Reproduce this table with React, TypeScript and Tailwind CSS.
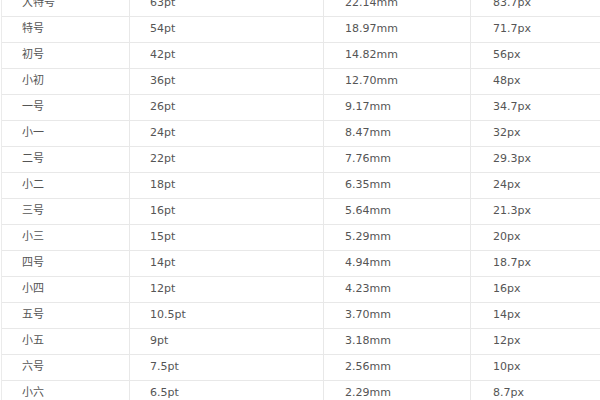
const rows = [
  ["大特号", "63pt", "22.14mm", "83.7px"],
  ["特号", "54pt", "18.97mm", "71.7px"],
  ["初号", "42pt", "14.82mm", "56px"],
  ["小初", "36pt", "12.70mm", "48px"],
  ["一号", "26pt", "9.17mm", "34.7px"],
  ["小一", "24pt", "8.47mm", "32px"],
  ["二号", "22pt", "7.76mm", "29.3px"],
  ["小二", "18pt", "6.35mm", "24px"],
  ["三号", "16pt", "5.64mm", "21.3px"],
  ["小三", "15pt", "5.29mm", "20px"],
  ["四号", "14pt", "4.94mm", "18.7px"],
  ["小四", "12pt", "4.23mm", "16px"],
  ["五号", "10.5pt", "3.70mm", "14px"],
  ["小五", "9pt", "3.18mm", "12px"],
  ["六号", "7.5pt", "2.56mm", "10px"],
  ["小六", "6.5pt", "2.29mm", "8.7px"],
]

export default function App() {
  return (
    <div className="h-[400px] w-[600px] overflow-hidden bg-white">
      <div
        className="-mt-[9px] ml-[1px] border-l border-[#ebebeb] text-[11px] text-[#555]"
        style={{ fontFamily: '"DejaVu Sans", Verdana, "Noto Sans CJK SC", sans-serif' }}
      >
        {rows.map((row) => (
          <div key={row[0]} className="flex h-[26px] border-b border-[#e8e8e8]">
            <div className="flex w-[128px] items-center border-r border-[#e8e8e8] pl-[20px]">{row[0]}</div>
            <div className="flex w-[194px] items-center border-r border-[#e8e8e8] pl-[20px]">{row[1]}</div>
            <div className="flex w-[147px] items-center border-r border-[#e8e8e8] pl-[21px]">{row[2]}</div>
            <div className="flex flex-1 items-center pl-[22px]">{row[3]}</div>
          </div>
        ))}
      </div>
    </div>
  )
}
